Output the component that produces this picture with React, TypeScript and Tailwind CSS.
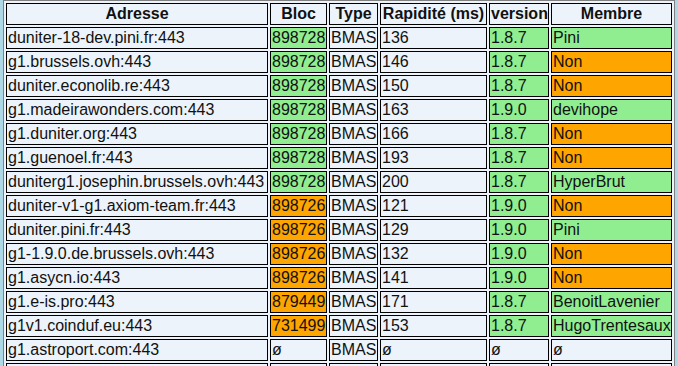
const GREEN = "bg-[#90ee90]"
const ORANGE = "bg-[#ffa500]"

type Node = {
  addr: string
  bloc: string
  blocOk?: boolean
  speed: string
  version: string
  member: string
  isMember?: boolean
}

const nodes: Node[] = [
  { addr: "duniter-18-dev.pini.fr:443", bloc: "898728", blocOk: true, speed: "136", version: "1.8.7", member: "Pini", isMember: true },
  { addr: "g1.brussels.ovh:443", bloc: "898728", blocOk: true, speed: "146", version: "1.8.7", member: "Non" },
  { addr: "duniter.econolib.re:443", bloc: "898728", blocOk: true, speed: "150", version: "1.8.7", member: "Non" },
  { addr: "g1.madeirawonders.com:443", bloc: "898728", blocOk: true, speed: "163", version: "1.9.0", member: "devihope", isMember: true },
  { addr: "g1.duniter.org:443", bloc: "898728", blocOk: true, speed: "166", version: "1.8.7", member: "Non" },
  { addr: "g1.guenoel.fr:443", bloc: "898728", blocOk: true, speed: "193", version: "1.8.7", member: "Non" },
  { addr: "duniterg1.josephin.brussels.ovh:443", bloc: "898728", blocOk: true, speed: "200", version: "1.8.7", member: "HyperBrut", isMember: true },
  { addr: "duniter-v1-g1.axiom-team.fr:443", bloc: "898726", speed: "121", version: "1.9.0", member: "Non" },
  { addr: "duniter.pini.fr:443", bloc: "898726", speed: "129", version: "1.9.0", member: "Pini", isMember: true },
  { addr: "g1-1.9.0.de.brussels.ovh:443", bloc: "898726", speed: "132", version: "1.9.0", member: "Non" },
  { addr: "g1.asycn.io:443", bloc: "898726", speed: "141", version: "1.9.0", member: "Non" },
  { addr: "g1.e-is.pro:443", bloc: "879449", speed: "171", version: "1.8.7", member: "BenoitLavenier", isMember: true },
  { addr: "g1v1.coinduf.eu:443", bloc: "731499", speed: "153", version: "1.8.7", member: "HugoTrentesaux", isMember: true },
]

const cell = "border border-black px-[1px] py-[1px] h-[22px] leading-[18px] whitespace-nowrap overflow-hidden"
const head = "border border-black px-[1px] py-[1px] h-[22px] leading-[18px] font-bold text-center whitespace-nowrap"

export default function App() {
  return (
    <div className="h-screen overflow-hidden bg-[#add8e6] pl-[3px] font-['Liberation_Sans',Arial,sans-serif] text-[16px] text-[#111]">
      <table className="w-[672px] table-fixed border-separate border-spacing-[2px] border border-[#808080] bg-[#ecf3fa]">
        <colgroup>
          <col className="w-[262px]" />
          <col className="w-[57px]" />
          <col className="w-[49px]" />
          <col className="w-[107px]" />
          <col className="w-[60px]" />
          <col className="w-[121px]" />
        </colgroup>
        <thead>
          <tr>
            <th className={head}>Adresse</th>
            <th className={head}>Bloc</th>
            <th className={head}>Type</th>
            <th className={head}>Rapidité (ms)</th>
            <th className={head}>version</th>
            <th className={head}>Membre</th>
          </tr>
        </thead>
        <tbody>
          {nodes.map((n) => (
            <tr key={n.addr}>
              <td className={cell}>{n.addr}</td>
              <td className={`${cell} ${n.blocOk ? GREEN : ORANGE}`}>{n.bloc}</td>
              <td className={cell}>BMAS</td>
              <td className={cell}>{n.speed}</td>
              <td className={`${cell} ${GREEN}`}>{n.version}</td>
              <td className={`${cell} ${n.isMember ? GREEN : ORANGE}`}>{n.member}</td>
            </tr>
          ))}
          <tr>
            <td className={cell}>g1.astroport.com:443</td>
            <td className={cell}>ø</td>
            <td className={cell}>BMAS</td>
            <td className={cell}>ø</td>
            <td className={cell}>ø</td>
            <td className={cell}>ø</td>
          </tr>
          <tr>
            <td className={cell}></td>
            <td className={cell}></td>
            <td className={cell}></td>
            <td className={cell}></td>
            <td className={cell}></td>
            <td className={cell}></td>
          </tr>
        </tbody>
      </table>
    </div>
  )
}
